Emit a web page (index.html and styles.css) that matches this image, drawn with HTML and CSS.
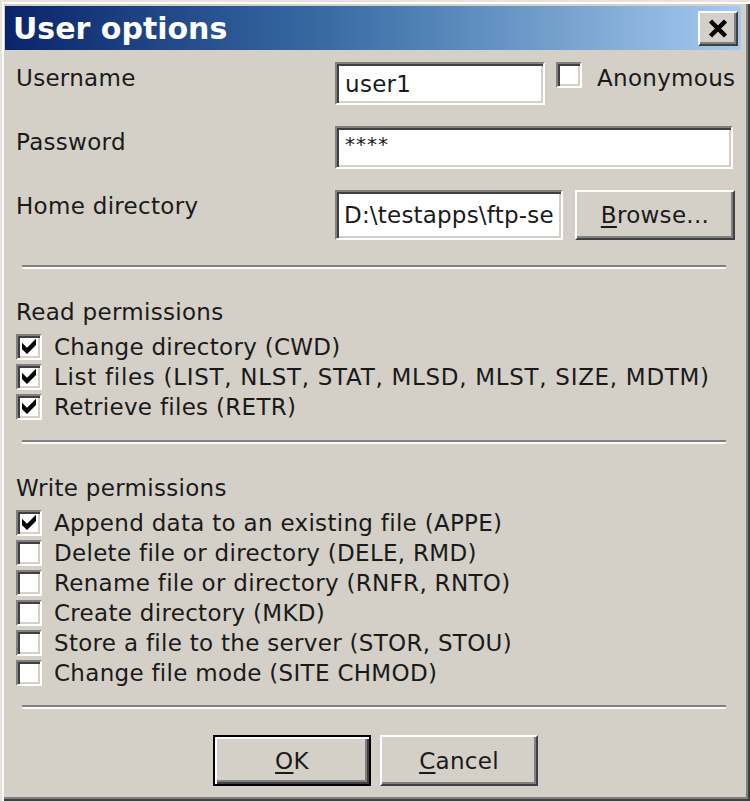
FILE: index.html
```html
<!DOCTYPE html>
<html>
<head>
<meta charset="utf-8">
<link rel="stylesheet" href="styles.css">
</head>
<body>
<div class="window">
  <div class="titlebar">
    <span class="title">User options</span>
    <span class="close">
      <svg viewBox="0 0 16 14" width="24" height="21"><path d="M3 2 L13 12 M13 2 L3 12" stroke="#000" stroke-width="3" fill="none"/></svg>
    </span>
  </div>
  <div class="body">
    <div class="form">
      <div class="lbl">Username</div>
      <div class="field">
        <div class="input w-user">user1</div>
        <span class="cb"></span>
        <span class="cbtext">Anonymous</span>
      </div>
      <div class="lbl">Password</div>
      <div class="field">
        <div class="input w-full pw">****</div>
      </div>
      <div class="lbl">Home directory</div>
      <div class="field tall">
        <div class="input w-home">D:\testapps\ftp-se</div>
        <span class="btn browse"><u>B</u>rowse...</span>
      </div>
    </div>

    <div class="sep sep1"></div>

    <div class="group read">
      <div class="gtitle">Read permissions</div>
      <div class="row"><span class="cb on"><svg viewBox="0 0 9 9"><polygon points="1,2.4 3.5,4.9 8,0.4 8,3.5 3.5,8 1,5.5" fill="#000"/></svg></span><span>Change directory (CWD)</span></div>
      <div class="row"><span class="cb on"><svg viewBox="0 0 9 9"><polygon points="1,2.4 3.5,4.9 8,0.4 8,3.5 3.5,8 1,5.5" fill="#000"/></svg></span><span class="caps">List files (LIST, NLST, STAT, MLSD, MLST, SIZE, MDTM)</span></div>
      <div class="row"><span class="cb on"><svg viewBox="0 0 9 9"><polygon points="1,2.4 3.5,4.9 8,0.4 8,3.5 3.5,8 1,5.5" fill="#000"/></svg></span><span>Retrieve files (RETR)</span></div>
    </div>

    <div class="sep sep2"></div>

    <div class="group write">
      <div class="gtitle">Write permissions</div>
      <div class="row"><span class="cb on"><svg viewBox="0 0 9 9"><polygon points="1,2.4 3.5,4.9 8,0.4 8,3.5 3.5,8 1,5.5" fill="#000"/></svg></span><span>Append data to an existing file (APPE)</span></div>
      <div class="row"><span class="cb"></span><span>Delete file or directory (DELE, RMD)</span></div>
      <div class="row"><span class="cb"></span><span>Rename file or directory (RNFR, RNTO)</span></div>
      <div class="row"><span class="cb"></span><span>Create directory (MKD)</span></div>
      <div class="row"><span class="cb"></span><span>Store a file to the server (STOR, STOU)</span></div>
      <div class="row"><span class="cb"></span><span>Change file mode (SITE CHMOD)</span></div>
    </div>

    <div class="sep sep3"></div>

    <div class="buttons">
      <span class="btn default"><u>O</u>K</span>
      <span class="btn"><u>C</u>ancel</span>
    </div>
  </div>
</div>
</body>
</html>
```

FILE: styles.css
```css
* { box-sizing: border-box; }
html, body { margin: 0; padding: 0; }
body {
  width: 750px;
  height: 801px;
  background: #d4d0c8;
  font-family: "DejaVu Sans", sans-serif;
  font-size: 23px;
  letter-spacing: 0.3px;
  color: #1a1a1a;
}
.window {
  width: 750px;
  height: 801px;
  background: #d4d0c8;
  padding: 6px 9px 5px 5px;
  box-shadow: inset 2px 2px 0 #e6e3dc, inset 4px 4px 0 #ffffff, inset -2px -2px 0 #404040, inset -4px -4px 0 #808080;
  display: flex;
  flex-direction: column;
}
.titlebar {
  height: 44px;
  flex: none;
  background: linear-gradient(to right, #0a246a 0%, #3a6ea5 45%, #a6caf0 100%);
  display: flex;
  align-items: center;
  justify-content: space-between;
  padding: 0 3px 0 8px;
}
.title {
  color: #fff;
  font-weight: bold;
  font-size: 30px;
  letter-spacing: 0;
}
.close {
  width: 40px;
  height: 35px;
  background: #d4d0c8;
  border: 2px solid;
  border-color: #fff #404040 #404040 #fff;
  box-shadow: inset -2px -2px 0 #808080;
  display: flex;
  align-items: center;
  justify-content: center;
}
.body {
  flex: 1;
  padding: 12px 6px 0 11px;
  display: flex;
  flex-direction: column;
}
.form {
  display: grid;
  grid-template-columns: 319px 1fr;
  grid-template-rows: 43px 43px 50px;
  row-gap: 21px;
}
.lbl {
  line-height: 30px;
  margin-top: 1px;
}
.field {
  display: flex;
  align-items: flex-start;
  height: 100%;
}
.input {
  height: 100%;
  background: #fff;
  border: 2px solid;
  border-color: #808080 #fff #fff #808080;
  box-shadow: inset 2px 2px 0 #404040, inset -2px -2px 0 #d4d0c8;
  padding: 0 8px;
  display: flex;
  align-items: center;
  white-space: nowrap;
  overflow: hidden;
}
.w-user { width: 210px; }
.w-full { width: 398px; }
.w-home { width: 228px; padding-left: 7px; letter-spacing: 0.2px; }
.pw { align-items: flex-start; padding-top: 4px; font-size: 20px; letter-spacing: 1px; }
.cb {
  width: 26px;
  height: 26px;
  flex: none;
  background: #fff;
  border: 2px solid;
  border-color: #808080 #fff #fff #808080;
  box-shadow: inset 2px 2px 0 #404040, inset -2px -2px 0 #d4d0c8;
  display: flex;
  align-items: center;
  justify-content: center;
}
.cb svg { width: 18px; height: 18px; display: block; }
.field .cb { margin-left: 11px; }
.cbtext { margin-left: 15px; line-height: 30px; margin-top: 1px; }
.btn {
  background: #d4d0c8;
  border: 2px solid;
  border-color: #fff #404040 #404040 #fff;
  box-shadow: inset -2px -2px 0 #808080;
  display: flex;
  align-items: center;
  justify-content: center;
}
.browse { width: 160px; height: 100%; margin-left: 12px; }
.sep {
  height: 4px;
  border-top: 2px solid #808080;
  border-bottom: 2px solid #fff;
  margin: 0 9px 0 6px;
  flex: none;
}
.sep1 { margin-top: 25px; }
.sep2 { margin-top: 18px; }
.sep3 { margin-top: 17px; }
.group { display: flex; flex-direction: column; }
.read { margin-top: 28px; }
.write { margin-top: 29px; }
.gtitle { line-height: 30px; margin-bottom: 5px; }
.row {
  display: flex;
  align-items: center;
  height: 30px;
  gap: 12px;
  white-space: nowrap;
}
.caps { letter-spacing: 0.7px; }
.buttons {
  margin-top: 26px;
  display: flex;
  justify-content: center;
  gap: 9px;
}
.buttons .btn { width: 158px; height: 51px; }
.btn.default {
  border: 2px solid #000;
  box-shadow: inset 2px 2px 0 #fff, inset -2px -2px 0 #404040, inset -4px -4px 0 #808080;
}
u { text-decoration-thickness: 2px; text-underline-offset: 3px; }
```
